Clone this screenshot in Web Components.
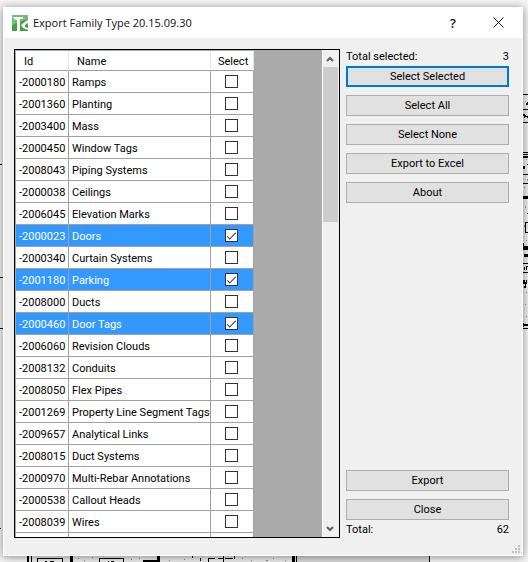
<!DOCTYPE html>
<html lang="en">
<head>
<meta charset="utf-8">
<title>Export Family Type</title>
<style>
html, body { height: 100%; }
body {
    margin: 0;
    background: #f4f4f4;
    color: #000;
    font: 11px/15px Roboto, "Liberation Sans", Arial, sans-serif;
}
</style>
</head>
<body>
<export-app></export-app>

<script>
const categories = [
    ["-2000180", "Ramps"],
    ["-2001360", "Planting"],
    ["-2003400", "Mass"],
    ["-2000450", "Window Tags"],
    ["-2008043", "Piping Systems"],
    ["-2000038", "Ceilings"],
    ["-2006045", "Elevation Marks"],
    ["-2000023", "Doors", true],
    ["-2000340", "Curtain Systems"],
    ["-2001180", "Parking", true],
    ["-2008000", "Ducts"],
    ["-2000460", "Door Tags", true],
    ["-2006060", "Revision Clouds"],
    ["-2008132", "Conduits"],
    ["-2008050", "Flex Pipes"],
    ["-2001269", "Property Line Segment Tags"],
    ["-2009657", "Analytical Links"],
    ["-2008015", "Duct Systems"],
    ["-2000970", "Multi-Rebar Annotations"],
    ["-2000538", "Callout Heads"],
    ["-2008039", "Wires"]
];

class BaseElement extends HTMLElement {
    constructor(html) {
        super();
        this.attachShadow({ mode: "open" });
        this.shadowRoot.innerHTML = html;
    }
}

// floor plan lying behind the dialog
class PlanBackdrop extends BaseElement {
    constructor() {
        super(`
<style>
:host { position: absolute; inset: 0; overflow: hidden; z-index: -1; }
svg { position: absolute; }
.left { left: 0; top: 0; }
.right { right: 0; top: 0; }
.bottom { left: 0; bottom: 0; }
</style>
<svg class="left" width="4" height="562" shape-rendering="crispEdges">
    <path d="M0 164.5h2M0 277.5h4M0 328.5h4M0 528.5h1" stroke="#000"/>
</svg>
<svg class="right" width="5" height="562" viewBox="0 0 5 562" shape-rendering="crispEdges">
    <rect y="94" width="5" height="235" fill="#eee"/>
    <path d="M0 94.5h5M0 109.5h5M0 122.5h5M0 152.5h5M0 154.5h5M0 174.5h5M0 183.5h5M0 263.5h5M0 272.5h5M0 328.5h5" stroke="#000"/>
    <path d="M0 156h5v2h-5zM0 196h5v3h-5zM0 246h5v4h-5zM0 243h1v3h-1zM0 323h1v4h-1zM0 324h5v2h-5z"/>
    <path d="M3 105h2v-3h-1v1h-1zM0 114h2v1h1v1h2v2h-1v-1h-2v1h-1v-2h-1zM0 166h2v3h-2zM4 164h1v1h-1zM4 213h1v1h-1zM1 254h4v3h-4zM1 267h1v3h-1zM3 266h2v1h-1v3h-1zM0 280h2v2h1v-2h1v4h-1v4h-2v-2h1v-2h-2z"/>
    <path d="M5 222.5h-2.500v10h2.500" fill="none" stroke="#000"/>
    <path d="M3 159h1v1h-1zM4 179h1v2h-1zM1 187h1v1h-1zM2 206h1v2h-1zM1 225h1v2h-1zM3 240h1v1h-1zM3 292h1v1h-1zM2 304h1v1h-1zM3 316h1v1h-1z" fill="#999"/>
</svg>
<svg class="bottom" width="430" height="6" shape-rendering="crispEdges">
    <path d="M27 0h403v6h-403z" fill="#ececec"/>
    <path d="M27 0h2v6h-2zM31 0h1v6h-1zM70 0h3v6h-3zM157 0h3v6h-3zM143 4h15v2h-15zM292 0h3v6h-3zM296 0h1v6h-1zM192 0h1v2h-1zM200 2h1v3h-1z"/>
    <path d="M37.5 6v-3.500h25v3.500M99.500 6v-3.500h24v3.500M208.500 6v-3.500h6M218 2.500h5M225 2.500h8M234.500 0v3M223.500 0v6" fill="none" stroke="#000"/>
    <path d="M45 5h2v1h-2zM50 5h4v1h-4zM108 5h1v1h-1zM111 5h3v1h-3z"/>
    <path d="M297 0h133v6h-133z" fill="#d8d8d8"/>
    <path d="M429 0h1v6h-1z"/>
    <path d="M78 2h1v1h-1zM84 4h1v1h-1zM92 1h1v1h-1zM131 3h1v1h-1zM139 2h1v1h-1zM169 4h1v1h-1zM184 3h1v1h-1zM242 2h1v1h-1zM251 4h1v1h-1zM266 4h2v1h-2zM273 2h1v1h-1zM285 4h1v1h-1z" fill="#888"/>
</svg>`);
    }
}

class TitleBar extends BaseElement {
    constructor() {
        super(`
<style>
:host {
    display: flex;
    align-items: center;
    height: 31px;
    padding: 0 18px 0 8px;
    background: #fff;
    font: 11px/16px "Open Sans", "Noto Sans", sans-serif;
    color: #111;
}
h1 { flex: 1; margin: 0 0 0 5px; font: inherit; }
button { display: flex; padding: 0; border: 0; background: none; color: inherit; font: inherit; }
.help { margin-right: 37px; font-size: 13px; font-weight: 600; }
</style>
<svg width="16" height="16" viewBox="0 0 16 16" aria-hidden="true">
    <rect width="16" height="16" fill="#3fa33f"/>
    <path d="M0 0h16v4L0 10z" fill="#74bd74"/>
    <path d="M1 2h10v2H8v12H5V5H4L2 4z" fill="#fff"/>
    <path d="M16 5l-2 1-5 4 2 3 5 2v-2l-3-1v-2l3-2z" fill="#fff"/>
</svg>
<h1><slot></slot></h1>
<button class="help" aria-label="Help">?</button>
<button aria-label="Close window">
    <svg width="11" height="11" viewBox="0 0 11 11"><path d="M.5.5l10 10M10.5.5l-10 10" stroke="#111"/></svg>
</button>`);
    }
}

class DialogButton extends BaseElement {
    constructor() {
        super(`
<style>
:host { display: block; }
button {
    display: block;
    width: 100%;
    height: 21px;
    padding: 0;
    border: 1px solid #adadad;
    background: #e1e1e1;
    color: #000;
    font: inherit;
    line-height: 19px;
}
:host([primary]) button { border: 2px solid #0078d7; line-height: 17px; }
</style>
<button><slot></slot></button>`);
    }
}

class TotalLine extends BaseElement {
    constructor() {
        super(`
<style>
:host { display: flex; justify-content: space-between; line-height: 16px; }
</style>
<span><slot></slot></span><span><slot name="value"></slot></span>`);
    }
}

class CategoryGrid extends BaseElement {
    constructor() {
        super(`
<style>
:host {
    display: flex;
    box-sizing: border-box;
    border: 1px solid #000;
    background: #ababab;
    overflow: hidden;
}
.view { flex: 1; min-width: 0; padding: 1px 0 0 1px; overflow: hidden; }
table { border-collapse: separate; border-spacing: 0; table-layout: fixed; width: 238px; background: #fff; }
th, td {
    box-sizing: border-box;
    height: 22px;
    padding: 1px 0 0 3px;
    border: solid #a0a0a0;
    border-width: 0 1px 1px 0;
    text-align: left;
    font-weight: normal;
    white-space: nowrap;
}
th { height: 20px; padding-left: 8px; border-right-color: #e5e5e5; }
th:last-child { padding-left: 7px; }
.id { width: 53px; }
.select { width: 43px; }
td:last-child { padding: 0 2px 0 0; }
tr.on td { background: #3399ff; color: #fff; }
input {
    appearance: none;
    display: grid;
    place-items: center;
    box-sizing: border-box;
    width: 13px;
    height: 13px;
    margin: 0 auto;
    border: 1px solid #333;
    background: #fff;
}
input:checked::after {
    content: "";
    width: 8px;
    height: 3px;
    border: solid #333;
    border-width: 0 0 1px 1px;
    transform: translateY(-1px) rotate(-45deg);
}
.bar { display: flex; flex-direction: column; width: 17px; box-sizing: border-box; border-left: 1px solid #fff; background: #f0f0f0; }
.bar svg { flex: none; }
.track { flex: 1; }
.thumb { width: 15px; height: 155px; background: #cdcdcd; }
</style>
<div class="view">
    <table>
        <thead><tr><th class="id">Id</th><th>Name</th><th class="select">Select</th></tr></thead>
        <tbody></tbody>
    </table>
</div>
<div class="bar">
    <svg width="15" height="17"><path d="M4 11l3-3 3 3" fill="none" stroke="#606060" stroke-width="2"/></svg>
    <div class="track"><div class="thumb"></div></div>
    <svg width="15" height="17"><path d="M4 7l3 3 3-3" fill="none" stroke="#606060" stroke-width="2"/></svg>
</div>`);
    }

    connectedCallback() {
        const body = this.shadowRoot.querySelector("tbody");
        for (const [id, name, on] of categories) {
            body.append(this.makeRow(id, name, on));
        }
        body.append(this.makeRow("", "", false, true));
    }

    makeRow(id, name, on, empty) {
        const row = document.createElement("tr");
        row.insertCell().textContent = id;
        row.insertCell().textContent = name;
        const cell = row.insertCell();
        if (!empty) {
            const box = document.createElement("input");
            box.type = "checkbox";
            box.checked = !!on;
            box.setAttribute("aria-label", name);
            box.addEventListener("change", () => row.classList.toggle("on", box.checked));
            cell.append(box);
        }
        row.classList.toggle("on", !!on);
        return row;
    }
}

class ExportApp extends BaseElement {
    constructor() {
        super(`
<style>
:host {
    display: flex;
    position: relative;
    z-index: 0;
    box-sizing: border-box;
    height: 100vh;
    padding: 7px 5px 6px 3px;
}
.dialog {
    flex: 1;
    display: flex;
    flex-direction: column;
    position: relative;
    border: solid #fff;
    border-width: 0 1px 1px;
    background: #f0f0f0;
    box-shadow: 0 1px 8px rgba(0, 0, 0, .45);
}
main { flex: 1; display: flex; gap: 6px; min-height: 0; padding: 11px 13px 17px 10px; }
category-grid { flex: 1; }
.side { flex: 0 0 163px; display: flex; flex-direction: column; gap: 8px; }
.side total-line:first-child { margin-bottom: -7px; }
.side total-line:last-child { margin-top: -6px; }
.space { flex: 1; }
.grip { position: absolute; right: 2px; bottom: 2px; }
</style>
<plan-backdrop></plan-backdrop>
<div class="dialog">
    <title-bar>Export Family Type 20.15.09.30</title-bar>
    <main>
        <category-grid></category-grid>
        <div class="side">
            <total-line>Total selected:<span slot="value">3</span></total-line>
            <dialog-button primary>Select Selected</dialog-button>
            <dialog-button>Select All</dialog-button>
            <dialog-button>Select None</dialog-button>
            <dialog-button>Export to Excel</dialog-button>
            <dialog-button>About</dialog-button>
            <div class="space"></div>
            <dialog-button>Export</dialog-button>
            <dialog-button>Close</dialog-button>
            <total-line>Total:<span slot="value">62</span></total-line>
        </div>
    </main>
    <svg class="grip" width="8" height="8"><path d="M6 0h2v2h-2zM3 3h2v2h-2zM6 3h2v2h-2zM0 6h2v2h-2zM3 6h2v2h-2zM6 6h2v2h-2z" fill="#bfbfbf"/></svg>
</div>`);
    }
}

customElements.define("plan-backdrop", PlanBackdrop);
customElements.define("title-bar", TitleBar);
customElements.define("dialog-button", DialogButton);
customElements.define("total-line", TotalLine);
customElements.define("category-grid", CategoryGrid);
customElements.define("export-app", ExportApp);
</script>
</body>
</html>
